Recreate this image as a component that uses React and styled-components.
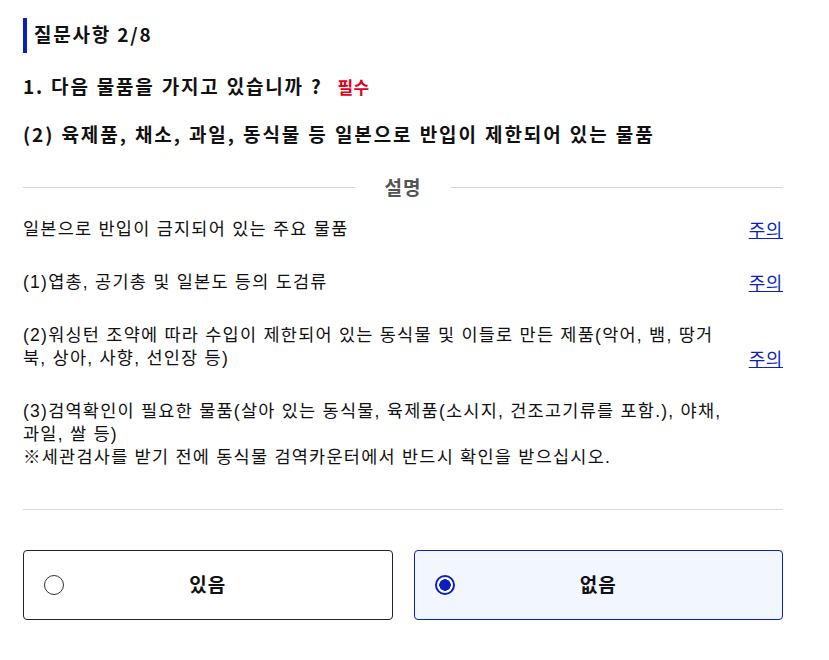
import styled, { createGlobalStyle } from 'styled-components';

const GlobalStyle = createGlobalStyle`
  body {
    margin: 0;
    background: #ffffff;
    font-family: "Noto Sans CJK KR", "Noto Sans", sans-serif;
    color: #111111;
  }
`;

const items = [
  { id: 1, text: '일본으로 반입이 금지되어 있는 주요 물품', link: true },
  { id: 2, text: '(1)엽총, 공기총 및 일본도 등의 도검류', link: true },
  {
    id: 3,
    text: '(2)워싱턴 조약에 따라 수입이 제한되어 있는 동식물 및 이들로 만든 제품(악어, 뱀, 땅거북, 상아, 사향, 선인장 등)',
    link: true,
  },
  {
    id: 4,
    text: '(3)검역확인이 필요한 물품(살아 있는 동식물, 육제품(소시지, 건조고기류를 포함.), 야채, 과일, 쌀 등)',
    note: '※세관검사를 받기 전에 동식물 검역카운터에서 반드시 확인을 받으십시오.',
  },
];

const options = [
  { id: 'yes', label: '있음', selected: false },
  { id: 'no', label: '없음', selected: true },
];

export default function App() {
  return (
    <>
      <GlobalStyle />
      <Page>
        <StepTitle>질문사항 2/8</StepTitle>
        <Question>
          1. 다음 물품을 가지고 있습니까 ?<Required>필수</Required>
        </Question>
        <SubQuestion>(2) 육제품, 채소, 과일, 동식물 등 일본으로 반입이 제한되어 있는 물품</SubQuestion>

        <SectionDivider>
          <span>설명</span>
        </SectionDivider>

        <ItemList>
          {items.map((item) => (
            <Item key={item.id}>
              <ItemText>
                {item.text}
                {item.note && <br />}
                {item.note}
              </ItemText>
              {item.link && <NoticeLink href="#">주의</NoticeLink>}
            </Item>
          ))}
        </ItemList>

        <Rule />

        <Options>
          {options.map((opt) => (
            <OptionButton key={opt.id} $selected={opt.selected}>
              <Radio $selected={opt.selected} />
              <OptionLabel>{opt.label}</OptionLabel>
            </OptionButton>
          ))}
        </Options>
      </Page>
    </>
  );
}

const Page = styled.div`
  width: 760px;
  padding: 18px 0 40px 23px;
`;

const StepTitle = styled.h2`
  margin: 0;
  height: 35px;
  box-sizing: border-box;
  padding: 0 0 4px 7px;
  display: flex;
  align-items: center;
  border-left: 4px solid #0a1fbf;
  font-size: 19px;
  line-height: 1;
  font-weight: 700;
  letter-spacing: 1.8px;
  color: #111;
`;

const Question = styled.h3`
  margin: 20px 0 0;
  font-size: 19px;
  line-height: 26px;
  font-weight: 700;
  letter-spacing: 1.8px;
  word-spacing: 1px;
`;

const Required = styled.span`
  margin-left: 15px;
  font-size: 17px;
  color: #e0001b;
  letter-spacing: 0.5px;
`;

const SubQuestion = styled.h3`
  margin: 21px 0 0;
  font-size: 19px;
  line-height: 26px;
  font-weight: 700;
  letter-spacing: 1.9px;
  word-spacing: 1px;
`;

const SectionDivider = styled.div`
  margin-top: 27px;
  display: flex;
  align-items: center;
  gap: 30px;
  font-size: 19px;
  line-height: 26px;
  font-weight: 700;
  color: #555;
  letter-spacing: 1px;

  &::before,
  &::after {
    content: '';
    flex: 1;
    height: 1px;
    background: #d6d6d6;
  }
`;

const ItemList = styled.ul`
  list-style: none;
  margin: 18px 0 0;
  padding: 0;
  display: flex;
  flex-direction: column;
  gap: 30px;
`;

const Item = styled.li`
  display: flex;
  align-items: flex-end;
  justify-content: space-between;
`;

const ItemText = styled.p`
  margin: 0;
  width: 706px;
  font-family: "Liberation Sans", "Noto Sans CJK KR", sans-serif;
  font-size: 17.5px;
  line-height: 23px;
  letter-spacing: 1.25px;
  color: #111;
`;

const NoticeLink = styled.a`
  flex-shrink: 0;
  font-size: 18px;
  line-height: 23px;
  letter-spacing: 0.6px;
  color: #0a1fc8;
  text-decoration: underline;
`;

const Rule = styled.hr`
  margin: 40px 0 0;
  border: 0;
  height: 1px;
  background: #d9d9d9;
`;

const Options = styled.div`
  margin-top: 40px;
  display: grid;
  grid-template-columns: 1fr 1fr;
  gap: 21px;
`;

const OptionButton = styled.button`
  height: 70px;
  display: grid;
  grid-template-columns: 1fr auto 1fr;
  align-items: center;
  padding: 0 20px;
  border: 1px solid ${(p) => (p.$selected ? '#0a1fbf' : '#222')};
  border-radius: 4px;
  background: ${(p) => (p.$selected ? '#f1f6ff' : '#fff')};
  font-family: inherit;
  cursor: pointer;
`;

const Radio = styled.span`
  justify-self: start;
  width: 20px;
  height: 20px;
  box-sizing: border-box;
  border-radius: 50%;
  border: ${(p) => (p.$selected ? '2px solid #0a1fbf' : '1px solid #333')};
  background: ${(p) => (p.$selected ? 'radial-gradient(circle, #0a1fbf 0 5.5px, #fff 6px)' : '#fff')};
`;

const OptionLabel = styled.span`
  padding-bottom: 4px;
  font-size: 19px;
  font-weight: 700;
  color: #111;
  letter-spacing: 1px;
`;
